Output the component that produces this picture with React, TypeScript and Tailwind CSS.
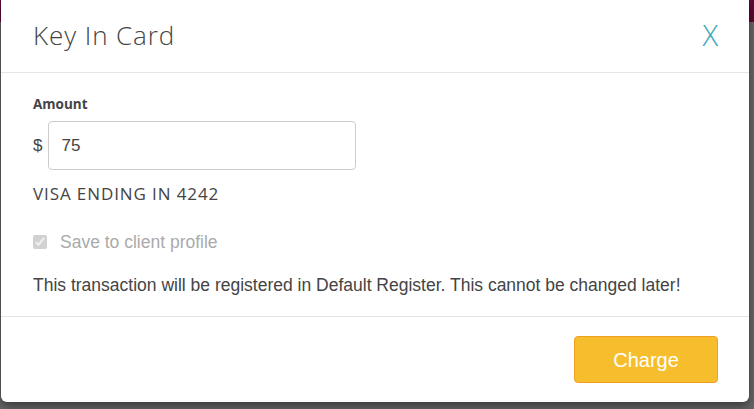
import React from 'react';

export default function App() {
  return (
    <div className="relative w-[754px] h-[409px] overflow-hidden bg-[#666666]">
      {/* page behind the backdrop */}
      <div className="h-[22px] bg-[#5e0a34]" />
      <div className="h-[387px] bg-[#666666]" />

      <div className="absolute left-px top-0 w-[748px] bg-white rounded-b-[6px] shadow-[0_4px_10px_rgba(0,0,0,0.45)]">
        <div className="flex items-center justify-between h-[73px] pl-[32px] pr-[31px] pb-[3px] border-b border-[#e5e5e5]">
          <h2 className="text-[26px] font-light text-[#444] leading-none tracking-[0.9px]" style={{ fontFamily: '"Open Sans", sans-serif' }}>
            Key In Card
          </h2>
          <button className="text-[29px] text-[#3aa7b9] leading-none font-light" style={{ fontFamily: '"Open Sans", sans-serif' }}>
            X
          </button>
        </div>

        <div className="px-[32px] pt-[21px] pb-[18px] text-[#444]" style={{ fontFamily: '"Liberation Sans", Arial, sans-serif' }}>
          <label className="block text-[13.5px] font-bold text-[#444] mb-[7px]" style={{ fontFamily: '"Open Sans", sans-serif' }}>
            Amount
          </label>
          <div className="flex items-center gap-[6px]">
            <span className="text-[17px]">$</span>
            <input
              type="text"
              defaultValue="75"
              className="w-[308px] h-[49px] px-[12px] border border-[#cccccc] rounded-[4px] text-[17px] text-[#444] outline-none"
            />
          </div>
          <div className="mt-[11px] text-[17px] tracking-[0.9px] text-[#444]" style={{ fontFamily: '"Open Sans", sans-serif' }}>
            VISA ENDING IN 4242
          </div>
          <label className="flex items-center gap-[13px] mt-[22px] text-[17.5px] text-[#aaaaaa]">
            <input type="checkbox" checked disabled readOnly className="w-[14px] h-[14px] accent-[#cccccc]" />
            Save to client profile
          </label>
          <p className="mt-[17px] text-[17.5px] text-[#444]">
            This transaction will be registered in Default Register. This cannot be changed later!
          </p>
        </div>

        <div className="flex justify-end border-t border-[#e5e5e5] pt-[19px] pb-[19px] pr-[31px]">
          <button
            className="w-[144px] h-[47px] bg-[#f6be2c] border border-[#f0a020] rounded-[4px] text-white text-[20px]"
            style={{ fontFamily: '"Liberation Sans", Arial, sans-serif' }}
          >
            Charge
          </button>
        </div>
      </div>
    </div>
  );
}
